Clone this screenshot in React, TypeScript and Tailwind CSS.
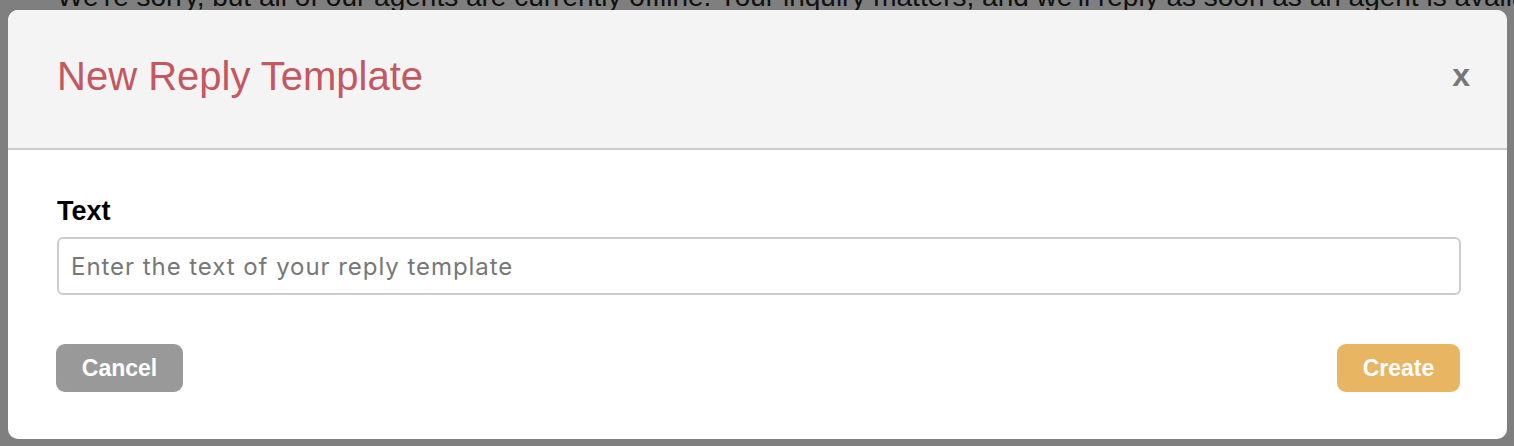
import { useState } from 'react';

const NewReplyTemplateModal = () => {
  const [text, setText] = useState('');

  return (
    <div className="w-[1499px] h-[429px] rounded-[10px] bg-white overflow-hidden flex flex-col">
      <div className="h-[140px] shrink-0 bg-[#f4f4f4] border-b-2 border-[#cccccc] flex items-center justify-between pl-[49px] pr-[37px] pb-[6px]">
        <h2 className="text-[40px] leading-[46px] text-[#c4575f] font-normal">New Reply Template</h2>
        <button className="text-[32px] leading-[32px] font-bold text-[#777777] mt-[-2px]">x</button>
      </div>

      <div className="flex-1 px-[48px] pt-[46px]">
        <label className="block text-[27px] leading-[31px] font-bold text-black pl-[1px]">Text</label>
        <input
          value={text}
          onChange={(e) => setText(e.target.value)}
          placeholder="Enter the text of your reply template"
          className="mt-[10px] block w-[1404px] h-[58px] ml-[1px] border-2 border-[#cccccc] rounded-[6px] px-[12px] text-[24px] text-[#333] placeholder:text-[#777777] outline-none font-['Inter',sans-serif] tracking-[0.95px]"
        />

        <div className="mt-[49px] flex justify-between w-[1404px]">
          <button className="h-[48px] w-[127px] rounded-[9px] bg-[#999999] text-white text-[23px] font-bold">
            Cancel
          </button>
          <button className="h-[48px] w-[123px] rounded-[9px] bg-[#e8b562] text-white text-[23px] font-bold">
            Create
          </button>
        </div>
      </div>
    </div>
  );
};

export default function App() {
  return (
    <div className="relative h-[446px] w-full overflow-hidden bg-white font-['Liberation_Sans',Arial,sans-serif]">
      {/* page behind the dialog */}
      <p className="mt-[-18px] pl-[57px] text-[28px] leading-[30px] text-[#222] whitespace-nowrap">
        We're sorry, but all of our agents are currently offline. Your inquiry matters, and we'll reply as soon as an agent is available.
      </p>

      <div className="absolute inset-0 bg-black/50 pt-[10px] pl-[8px]">
        <NewReplyTemplateModal />
      </div>
    </div>
  );
}
